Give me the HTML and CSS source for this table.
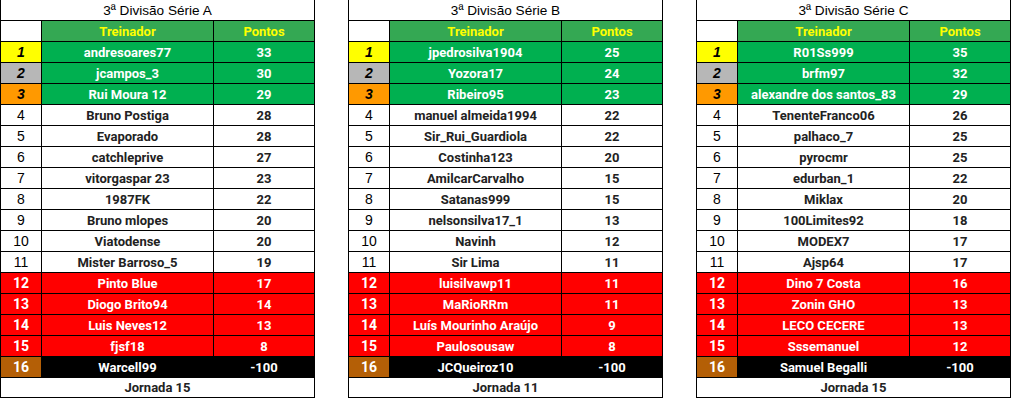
FILE: index.html
```html
<!DOCTYPE html>
<html>
<head>
<meta charset="utf-8">
<link rel="stylesheet" href="styles.css">
</head>
<body>
<div class="page">

<div class="tbl">
  <div class="title">3ª Divisão Série A</div>
  <div class="hd-blank"></div><div class="hd">Treinador</div><div class="hd">Pontos</div>
  <div class="rk r1">1</div><div class="nm top">andresoares77</div><div class="pt top">33</div>
  <div class="rk r2">2</div><div class="nm top">jcampos_3</div><div class="pt top">30</div>
  <div class="rk r3">3</div><div class="nm top">Rui Moura 12</div><div class="pt top">29</div>
  <div class="rk">4</div><div class="nm">Bruno Postiga</div><div class="pt">28</div>
  <div class="rk">5</div><div class="nm">Evaporado</div><div class="pt">28</div>
  <div class="rk">6</div><div class="nm">catchleprive</div><div class="pt">27</div>
  <div class="rk">7</div><div class="nm">vitorgaspar 23</div><div class="pt">23</div>
  <div class="rk">8</div><div class="nm">1987FK</div><div class="pt">22</div>
  <div class="rk">9</div><div class="nm">Bruno mlopes</div><div class="pt">20</div>
  <div class="rk">10</div><div class="nm">Viatodense</div><div class="pt">20</div>
  <div class="rk">11</div><div class="nm">Mister Barroso_5</div><div class="pt">19</div>
  <div class="rk red">12</div><div class="nm red">Pinto Blue</div><div class="pt red">17</div>
  <div class="rk red">13</div><div class="nm red">Diogo Brito94</div><div class="pt red">14</div>
  <div class="rk red">14</div><div class="nm red">Luis Neves12</div><div class="pt red">13</div>
  <div class="rk red">15</div><div class="nm red">fjsf18</div><div class="pt red">8</div>
  <div class="rk brown">16</div><div class="nm blk">Warcell99</div><div class="pt blk">-100</div>
  <div class="foot">Jornada 15</div>
</div>

<div class="tbl">
  <div class="title">3ª Divisão Série B</div>
  <div class="hd-blank"></div><div class="hd">Treinador</div><div class="hd">Pontos</div>
  <div class="rk r1">1</div><div class="nm top">jpedrosilva1904</div><div class="pt top">25</div>
  <div class="rk r2">2</div><div class="nm top">Yozora17</div><div class="pt top">24</div>
  <div class="rk r3">3</div><div class="nm top">Ribeiro95</div><div class="pt top">23</div>
  <div class="rk">4</div><div class="nm">manuel almeida1994</div><div class="pt">22</div>
  <div class="rk">5</div><div class="nm">Sir_Rui_Guardiola</div><div class="pt">22</div>
  <div class="rk">6</div><div class="nm">Costinha123</div><div class="pt">20</div>
  <div class="rk">7</div><div class="nm">AmilcarCarvalho</div><div class="pt">15</div>
  <div class="rk">8</div><div class="nm">Satanas999</div><div class="pt">15</div>
  <div class="rk">9</div><div class="nm">nelsonsilva17_1</div><div class="pt">13</div>
  <div class="rk">10</div><div class="nm">Navinh</div><div class="pt">12</div>
  <div class="rk">11</div><div class="nm">Sir Lima</div><div class="pt">11</div>
  <div class="rk red">12</div><div class="nm red">luisilvawp11</div><div class="pt red">11</div>
  <div class="rk red">13</div><div class="nm red">MaRioRRm</div><div class="pt red">11</div>
  <div class="rk red">14</div><div class="nm red">Luís Mourinho Araújo</div><div class="pt red">9</div>
  <div class="rk red">15</div><div class="nm red">Paulosousaw</div><div class="pt red">8</div>
  <div class="rk brown">16</div><div class="nm blk">JCQueiroz10</div><div class="pt blk">-100</div>
  <div class="foot">Jornada 11</div>
</div>

<div class="tbl">
  <div class="title">3ª Divisão Série C</div>
  <div class="hd-blank"></div><div class="hd">Treinador</div><div class="hd">Pontos</div>
  <div class="rk r1">1</div><div class="nm top">R01Ss999</div><div class="pt top">35</div>
  <div class="rk r2">2</div><div class="nm top">brfm97</div><div class="pt top">32</div>
  <div class="rk r3">3</div><div class="nm top">alexandre dos santos_83</div><div class="pt top">29</div>
  <div class="rk">4</div><div class="nm">TenenteFranco06</div><div class="pt">26</div>
  <div class="rk">5</div><div class="nm">palhaco_7</div><div class="pt">25</div>
  <div class="rk">6</div><div class="nm">pyrocmr</div><div class="pt">25</div>
  <div class="rk">7</div><div class="nm">edurban_1</div><div class="pt">22</div>
  <div class="rk">8</div><div class="nm">Miklax</div><div class="pt">20</div>
  <div class="rk">9</div><div class="nm">100Limites92</div><div class="pt">18</div>
  <div class="rk">10</div><div class="nm">MODEX7</div><div class="pt">17</div>
  <div class="rk">11</div><div class="nm">Ajsp64</div><div class="pt">17</div>
  <div class="rk red">12</div><div class="nm red">Dino 7 Costa</div><div class="pt red">16</div>
  <div class="rk red">13</div><div class="nm red">Zonin GHO</div><div class="pt red">13</div>
  <div class="rk red">14</div><div class="nm red">LECO CECERE</div><div class="pt red">13</div>
  <div class="rk red">15</div><div class="nm red">Sssemanuel</div><div class="pt red">12</div>
  <div class="rk brown">16</div><div class="nm blk">Samuel Begalli</div><div class="pt blk">-100</div>
  <div class="foot">Jornada 15</div>
</div>

</div>
</body>
</html>
```

FILE: styles.css
```css
html, body {
  margin: 0;
  padding: 0;
  background: #ffffff;
}

.page {
  display: flex;
  gap: 33px;
  align-items: flex-start;
}

.tbl {
  display: grid;
  grid-template-columns: 40px 171px 100px;
  grid-template-rows: 20px repeat(17, 20px) 19px;
  gap: 1px;
  background: #000000;
  padding: 0 1px 1px 1px;
  font-family: Roboto, "Liberation Sans", sans-serif;
  font-size: 13px;
  color: #222222;
}

.tbl > div {
  background: #ffffff;
  display: flex;
  align-items: center;
  justify-content: center;
  white-space: nowrap;
  overflow: hidden;
}

.title {
  grid-column: 1 / 4;
  font-family: "Liberation Sans", Arial, sans-serif;
  font-size: 13.6px;
  color: #000000;
}

.hd {
  font-weight: 700;
  color: #ffff00;
  background: #34a853 !important;
}

.nm, .pt {
  font-weight: 700;
}

.rk {
  font-family: "Liberation Sans", Arial, sans-serif;
  font-size: 14px;
  color: #000000;
}

.r1, .r2, .r3 {
  font-weight: 700;
  font-style: italic;
}

.r1 { background: #ffff00 !important; }
.r2 { background: #b7b7b7 !important; }
.r3 { background: #ff9900 !important; }

.top {
  background: #00b050 !important;
  color: #ffffff;
}

.red {
  background: #ff0000 !important;
  color: #ffffff;
}

.rk.red, .rk.brown {
  font-family: Roboto, "Liberation Sans", sans-serif;
  font-weight: 700;
  color: #ffffff;
}

.brown {
  background: #b45f06 !important;
}

.blk {
  background: #000000 !important;
  color: #ffffff;
}

.foot {
  grid-column: 1 / 4;
  font-weight: 700;
}
```
